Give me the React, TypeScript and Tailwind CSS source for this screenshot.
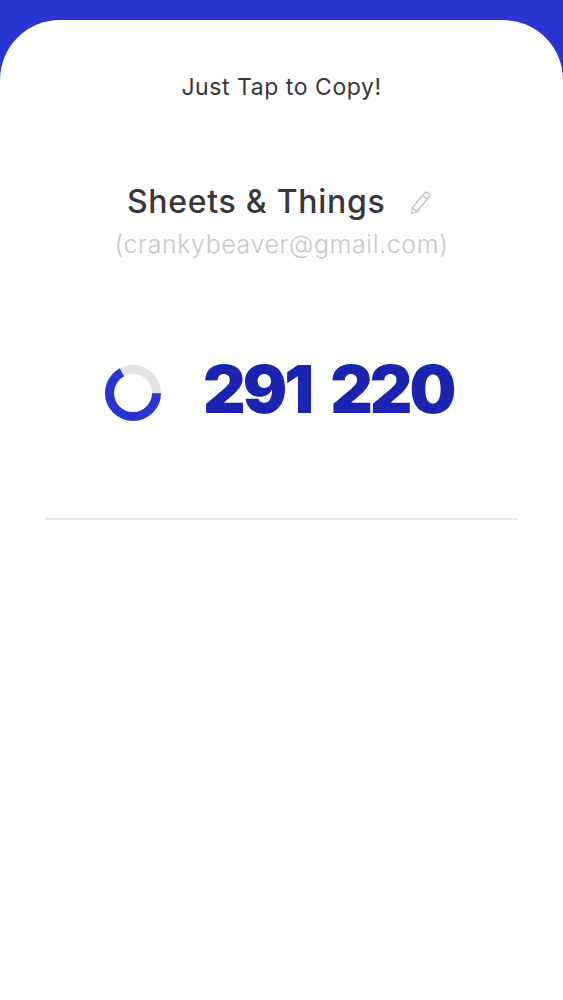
export default function App() {
  const r = 23.5;
  const c = 2 * Math.PI * r;
  return (
    <div className="h-[1000px] w-[563px] overflow-hidden bg-[#2a35d1] pt-[20px] font-['Inter',sans-serif]">
      <div className="flex h-[980px] flex-col rounded-t-[60px] bg-white">
        <p className="mt-[53px] h-[28px] text-center text-[23px] leading-[28px] tracking-[0.55px] text-[#38363a]">Just Tap to Copy!</p>
        <div className="mt-[81px] flex h-[40px] items-center pl-[127px]">
          <span className="text-[32px] font-medium leading-[40px] tracking-[0.7px] text-[#38363a]">Sheets &amp; Things</span>
          <svg className="ml-[23px] mt-[1px]" width="24" height="26" viewBox="0 0 24 26" fill="none" stroke="#c4c4c6" strokeWidth="1.5" strokeLinejoin="round" strokeLinecap="round">
            <path d="M16.6 3.2c1.1-1.2 2.9-1.2 4 0 1.1 1.2 1.1 2.9 0 4L9 21.6l-5.6 2 .8-5.8z" />
            <path d="M14.6 5.4l4.4 3.6" />
            <path d="M4.4 17.8l4.6 3.8" />
          </svg>
        </div>
        <p className="mt-[7px] h-[30px] text-center text-[25px] font-light leading-[30px] tracking-[0.58px] text-[#c6c6ca]">(crankybeaver@gmail.com)</p>
        <div className="mt-[99px] flex h-[70px] items-center pl-[105px]">
          <svg width="56" height="56" viewBox="0 0 56 56" fill="none" strokeWidth="9">
            <circle cx="28" cy="28" r={r} stroke="#2a35d1" strokeDasharray={`${c * 0.672} ${c}`} />
            <circle cx="28" cy="28" r={r} stroke="#e2e2e2" strokeDasharray={`${c * 0.328} ${c}`} transform="rotate(-118 28 28)" />
          </svg>
          <span className="ml-[42px] -translate-y-[4px] text-[66px] font-black leading-[70px] tracking-[-3px] text-[#1b24b0] [word-spacing:9px]">291 220</span>
        </div>
        <div className="mx-[45px] mt-[90px] h-[2px] bg-[#e6e6e6]" />
      </div>
    </div>
  );
}
